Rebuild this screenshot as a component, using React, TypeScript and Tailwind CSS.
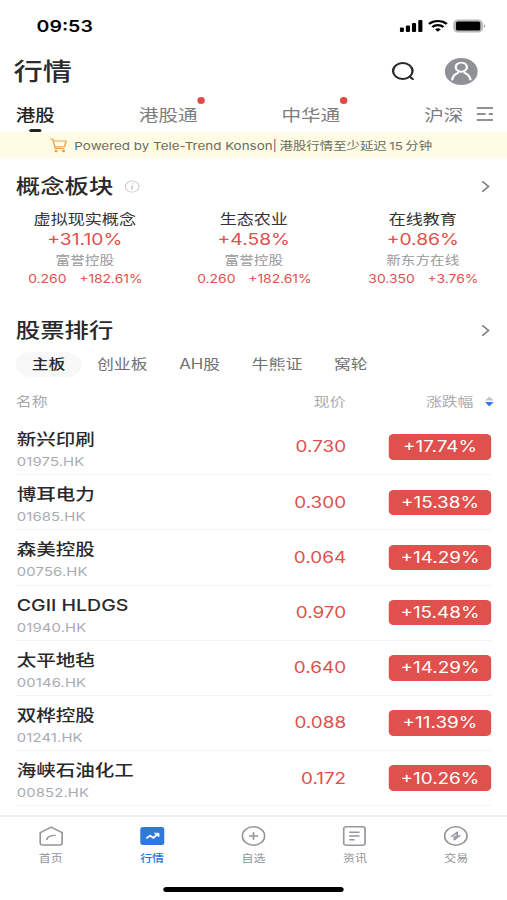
import React from 'react';
import { ChevronRight } from 'lucide-react';

interface Concept {
  name: string;
  change: string;
  leader: string;
  price: string;
  leaderChange: string;
}

interface Stock {
  name: string;
  code: string;
  price: string;
  change: string;
}

const markets = [
  { label: '港股', active: true, dot: false },
  { label: '港股通', active: false, dot: true },
  { label: '中华通', active: false, dot: true },
  { label: '沪深', active: false, dot: false },
];

const concepts: Concept[] = [
  { name: '虚拟现实概念', change: '+31.10%', leader: '富誉控股', price: '0.260', leaderChange: '+182.61%' },
  { name: '生态农业', change: '+4.58%', leader: '富誉控股', price: '0.260', leaderChange: '+182.61%' },
  { name: '在线教育', change: '+0.86%', leader: '新东方在线', price: '30.350', leaderChange: '+3.76%' },
];

const boards = ['主板', '创业板', 'AH股', '牛熊证', '窝轮'];

const stocks: Stock[] = [
  { name: '新兴印刷', code: '01975.HK', price: '0.730', change: '+17.74%' },
  { name: '博耳电力', code: '01685.HK', price: '0.300', change: '+15.38%' },
  { name: '森美控股', code: '00756.HK', price: '0.064', change: '+14.29%' },
  { name: 'CGII HLDGS', code: '01940.HK', price: '0.970', change: '+15.48%' },
  { name: '太平地毡', code: '00146.HK', price: '0.640', change: '+14.29%' },
  { name: '双桦控股', code: '01241.HK', price: '0.088', change: '+11.39%' },
  { name: '海峡石油化工', code: '00852.HK', price: '0.172', change: '+10.26%' },
];

const StatusBar: React.FC = () => (
  <div className="flex h-[52px] shrink-0 items-center justify-between pl-[30px] pr-[17px]">
    <span className="text-[16px] font-semibold text-black">09:53</span>
    <svg width="71" height="14" viewBox="0 0 71 14">
      <rect x="0" y="8.5" width="3.4" height="4.5" rx="1" />
      <rect x="5" y="6.5" width="3.4" height="6.5" rx="1" />
      <rect x="10" y="4" width="3.4" height="9" rx="1" />
      <rect x="15.2" y="1" width="3.4" height="12" rx="1" />
      <g fill="none" stroke="#000" strokeWidth="2.1">
        <path d="M24 4.9a10.5 10.5 0 0 1 14.6 0" />
        <path d="M26.7 8a6.6 6.6 0 0 1 9.2 0" />
      </g>
      <path d="M28.9 10.2a3.6 3.6 0 0 1 4.8 0L31.3 12.8z" />
      <rect x="44.6" y="1.2" width="23" height="11.6" rx="3.4" fill="#c4c4c4" stroke="#b4b4b4" strokeWidth="1.2" />
      <rect x="46.1" y="2.5" width="20" height="9" rx="1.6" />
      <path d="M69 5.2a2 2 0 0 1 0 3.6z" fill="#999" />
    </svg>
  </div>
);

const Header: React.FC = () => (
  <div className="flex h-[39px] shrink-0 items-center justify-between pl-[11px] pr-[24px]">
    <h1 className="text-[24px] font-medium leading-none text-[#2c2c2e]">行情</h1>
    <div className="flex items-center gap-[25px]">
      <svg width="19" height="20" viewBox="0 0 19 20" fill="none" stroke="#26282c" strokeWidth="1.9" strokeLinecap="round">
        <circle cx="9.500" cy="9" r="8" />
        <path d="M15.300 14.800l2.400 2.300" />
      </svg>
      <svg width="27" height="27" viewBox="0 0 27 27" fill="none" stroke="#fff" strokeWidth="1.9" strokeLinecap="round">
        <circle cx="13.5" cy="13.5" r="13.5" fill="#8f9196" stroke="none" />
        <circle cx="13.5" cy="9.2" r="4.6" />
        <path d="M6 21.500c.6-3.200 2.200-5.500 4.800-6.700M21 21.500c-.6-3.200-2.200-5.500-4.800-6.700" />
      </svg>
    </div>
  </div>
);

const MarketTabs: React.FC = () => (
  <div className="flex h-[41px] shrink-0 items-end pl-[13px]">
    <div className="flex gap-[69px]">
      {markets.map((market) => (
        <div key={market.label} className="relative flex flex-col items-center">
          <span
            className={`text-[16px] leading-6 ${market.active ? 'font-medium text-[#222]' : 'text-[#7d7d80]'}`}
          >
            {market.label}
          </span>
          <span className={`mt-[2px] h-[3px] w-[10px] rounded-full ${market.active ? 'bg-[#222]' : 'bg-transparent'}`} />
          {market.dot && <i className="absolute -right-[6px] -top-[6px] h-[7px] w-[6px] rounded-full bg-[#e04a45]" />}
        </div>
      ))}
    </div>
    <svg className="mb-[11px] ml-[11px]" width="14" height="14" viewBox="0 0 14 14" stroke="#6c6f73" strokeWidth="1.3">
      <path d="M0 1h13.500M0 7h7.500M10 7h3.500M0 13h13.500" />
    </svg>
  </div>
);

const DelayNotice: React.FC = () => (
  <div className="flex h-[26px] shrink-0 items-center bg-[#fefce4] pl-[41px]">
    <svg width="14" height="15" viewBox="0 0 14 15" fill="none" stroke="#eda04c" strokeWidth="1.1" strokeLinejoin="round">
      <path d="M0 1h2.300l2 9.500h7.700M2.800 3h10.500l-1.300 5.500-8 .6" />
      <circle cx="5" cy="13" r=".8" fill="#eda04c" />
      <circle cx="11" cy="13" r=".8" fill="#eda04c" />
    </svg>
    <p className="ml-[6px] flex gap-[2px] whitespace-nowrap pt-[2px] text-[11px] text-[#6d6c63]">
      <span>Powered by Tele-Trend Konson|</span>
      <span>港股行情至少延迟</span>
      <span>15</span>
      <span>分钟</span>
    </p>
  </div>
);

interface SectionTitleProps {
  title: string;
  info?: boolean;
}

const SectionTitle: React.FC<SectionTitleProps> = ({ title, info }) => (
  <div className="flex h-7 shrink-0 items-center pl-[13px] pr-[8px]">
    <h2 className="pt-px text-[20px] font-medium leading-none text-[#29292b]">{title}</h2>
    {info && (
      <svg className="ml-[9px]" width="13" height="13" viewBox="0 0 13 13" fill="none" stroke="#c3c5c9">
        <circle cx="6.5" cy="6.5" r="5.600" strokeWidth="0.900" />
        <path d="M6.700 5.600l-.7 4M7 3.300l-.1.900" strokeWidth="1.200" />
      </svg>
    )}
    <ChevronRight className="ml-auto h-[23px] w-[19px] text-[#808286]" strokeWidth={2} />
  </div>
);

const ConceptGrid: React.FC = () => (
  <div className="mt-[9px] grid shrink-0 grid-cols-3">
    {concepts.map((concept) => (
      <div key={concept.name} className="flex flex-col items-center whitespace-nowrap pl-[0.500px] text-[#e0504c]">
        <span className="text-[14px] leading-5 text-[#333]">{concept.name}</span>
        <span className="pt-px text-[15.8px] leading-5">{concept.change}</span>
        <span className="text-[12px] leading-[22px] text-[#98999c]">{concept.leader}</span>
        <span className="flex gap-[10.500px] pl-px text-[11.4px] leading-[14px]">
          <span>{concept.price}</span>
          <span>{concept.leaderChange}</span>
        </span>
      </div>
    ))}
  </div>
);

const BoardTabs: React.FC = () => (
  <div className="mt-2 flex h-[25px] shrink-0 items-center pl-[13px]">
    {boards.map((board, index) => (
      <span
        key={board}
        className={`flex h-[25px] items-center gap-[2px] rounded-full px-[13px] text-[13.8px] ${
          index === 0 ? 'bg-[#f8f8f9] font-medium text-[#29292b]' : 'text-[#707174]'
        }`}
      >
        {board}
      </span>
    ))}
  </div>
);

const TableHead: React.FC = () => (
  <div className="mt-[14px] flex h-5 shrink-0 items-center pl-[13px] pr-[11px] pt-px text-[13px] text-[#a9abb2]">
    <span>名称</span>
    <span className="ml-auto">现价</span>
    <span className="ml-[66px]">涨跌幅</span>
    <svg className="ml-[9.500px]" width="7" height="11" viewBox="0 0 7 11">
      <path d="M3.500 0.500L7 4.500H0z" fill="#c0c2c8" />
      <path d="M3.500 10.500L0 6H7z" fill="#3478ec" />
    </svg>
  </div>
);

const StockRow: React.FC<{ stock: Stock }> = ({ stock }) => (
  <div className="mx-[13px] flex h-[55.2px] shrink-0 items-center border-b-[1.5px] border-[#f3f3f4]">
    <div className="flex flex-1 flex-col pl-[0.800px] pt-[5px]">
      <span className="text-[16px] font-medium leading-6 text-[#29292b]">{stock.name}</span>
      <span className="pt-px text-[12.2px] leading-5 tracking-[0.1px] text-[#a9abb2]">{stock.code}</span>
    </div>
    <span className="text-[15.5px] text-[#e0504c]">{stock.price}</span>
    <span className="ml-[35px] flex h-[25.500px] w-[84px] items-center justify-center rounded-[4px] bg-[#e0504c] text-[15.5px] text-white">
      {stock.change}
    </span>
  </div>
);

const navItems = [
  {
    label: '首页',
    icon: (
      <g>
        <path d="M1 6.600L10 1.200l9 5.400v10.400q0 2-2 2H3q-2 0-2-2z" />
        <path d="M6.300 14c.3-3 2.900-4.600 7.400-4.600" />
      </g>
    ),
  },
  {
    label: '行情',
    active: true,
    icon: (
      <g>
        <rect x="0" y="1" width="20" height="18" rx="2.500" fill="#2f79dc" stroke="none" />
        <path d="M5 12.400l3.200-2.700 2.600 2.200 3-3" stroke="#fff" strokeWidth="1.700" />
        <path d="M11.500 7.200h4v3.600z" fill="#fff" stroke="#fff" strokeWidth=".6" />
      </g>
    ),
  },
  {
    label: '自选',
    icon: (
      <g>
        <circle cx="10" cy="10" r="9.200" />
        <path d="M10 6.300v7.400M6.300 10h7.400" />
      </g>
    ),
  },
  {
    label: '资讯',
    icon: (
      <g>
        <rect x="1" y="0.800" width="17.500" height="18.400" rx="2" />
        <path d="M5.500 6.300h8.500M5.500 10h8.500M5.500 13.700h4.500" />
      </g>
    ),
  },
  {
    label: '交易',
    icon: (
      <g>
        <circle cx="10" cy="10" r="9.200" />
        <path d="M6.300 10.700l4.900-4.500v3.200L8.800 11.500M13.700 9.300l-4.900 4.500v-3.200" />
      </g>
    ),
  },
];

const BottomNav: React.FC = () => (
  <nav className="mt-auto flex h-[85px] shrink-0 flex-col items-center border-t-2 border-[#f1f1f3] bg-white">
    <div className="grid w-full grid-cols-5 pt-[9px]">
      {navItems.map((item) => (
        <div key={item.label} className="flex flex-col items-center">
          <svg
            width="20"
            height="20"
            viewBox="0 0 20 20"
            fill="none"
            stroke="#94979c"
            strokeWidth="1.400"
            strokeLinejoin="round"
          >
            {item.icon}
          </svg>
          <span
            className={`mt-[5px] text-[9.8px] leading-[15px] ${
              item.active ? 'font-medium text-[#2b72e8]' : 'text-[#919398]'
            }`}
          >
            {item.label}
          </span>
        </div>
      ))}
    </div>
    <div className="mb-[8px] mt-auto h-[5px] w-[148px] rounded-full bg-black" />
  </nav>
);

const App: React.FC = () => (
  <div className="h-[900px] w-[507px] overflow-hidden bg-white">
    {/* 416px layout widened to fill the 507px viewport */}
    <div className="flex h-full w-[416px] origin-top-left scale-x-[1.21875] flex-col font-['Inter','Noto_Sans_CJK_SC',sans-serif]">
      <StatusBar />
      <Header />
      <MarketTabs />
      <DelayNotice />
      <div className="h-[14px] shrink-0" />
      <SectionTitle title="概念板块" info />
      <ConceptGrid />
      <div className="h-[30px] shrink-0" />
      <SectionTitle title="股票排行" />
      <BoardTabs />
      <TableHead />
      <div className="mt-[9px] flex flex-col">
        {stocks.map((stock) => (
          <StockRow key={stock.code} stock={stock} />
        ))}
      </div>
      <BottomNav />
    </div>
  </div>
);

export default App;
